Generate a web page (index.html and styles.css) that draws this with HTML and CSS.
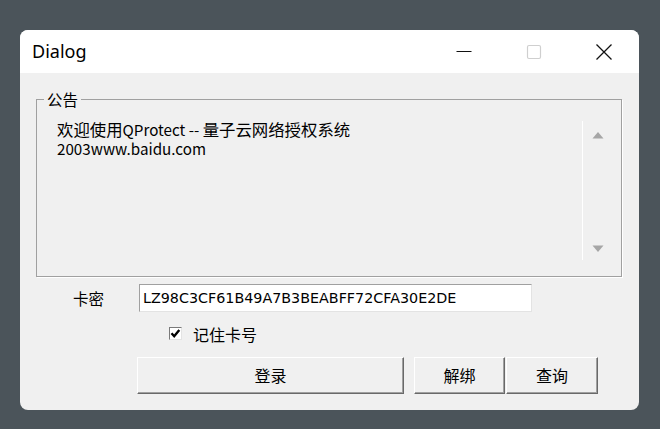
FILE: index.html
```html
<!DOCTYPE html>
<html lang="zh">
<head>
<meta charset="utf-8">
<title>Dialog</title>
<link rel="stylesheet" href="styles.css">
</head>
<body>
<div class="window">
  <div class="titlebar">
    <div class="title">Dialog</div>
    <div class="controls">
      <div class="ctl"><svg width="16" height="16" viewBox="0 0 16 16"><path d="M0.5 7.5H15.5" stroke="#111" stroke-width="1.2"/></svg></div>
      <div class="ctl"><svg width="16" height="16" viewBox="0 0 16 16"><rect x="1.5" y="1.5" width="13" height="13" rx="1.5" fill="none" stroke="#cfcfcf" stroke-width="1.2"/></svg></div>
      <div class="ctl"><svg width="16" height="16" viewBox="0 0 16 16"><path d="M0.5 0.5L15.5 15.5M15.5 0.5L0.5 15.5" stroke="#111" stroke-width="1.3"/></svg></div>
    </div>
  </div>
  <div class="client">
    <fieldset class="group">
      <legend class="legend">公告</legend>
      <div class="memo">
        <div class="memo-text">
          <div><span class="cjk">欢迎使用</span>QProtect -- <span class="cjk">量子云网络授权系统</span></div>
          <div>2003www.baidu.com</div>
        </div>
        <div class="scroll">
          <svg width="12" height="8" viewBox="0 0 12 8"><path d="M0.5 7.5L6 1L11.5 7.5Z" fill="#a6a6a6"/></svg>
          <svg width="12" height="8" viewBox="0 0 12 8"><path d="M0.5 0.5L6 7L11.5 0.5Z" fill="#a6a6a6"/></svg>
        </div>
      </div>
    </fieldset>
    <div class="row-key">
      <span class="label">卡密</span>
      <div class="input">LZ98C3CF61B49A7B3BEABFF72CFA30E2DE</div>
    </div>
    <div class="row-check">
      <span class="checkbox"><svg width="11" height="11" viewBox="0 0 11 11"><path d="M1.5 5.3L4.2 8.2L9.3 2" fill="none" stroke="#000" stroke-width="2.4"/></svg></span>
      <span class="check-label">记住卡号</span>
    </div>
    <div class="row-buttons">
      <div class="btn btn-login">登录</div>
      <div class="btn btn-unbind">解绑</div>
      <div class="btn btn-query">查询</div>
    </div>
  </div>
</div>
</body>
</html>
```
FILE: styles.css
```css
* { box-sizing: border-box; }
html, body { margin: 0; padding: 0; }
body {
  background: #4b545a;
  width: 660px;
  height: 429px;
  overflow: hidden;
  padding: 30px 0 0 20px;
  font-family: "Noto Sans CJK SC", sans-serif;
  color: #000;
}
.window {
  width: 619px;
  height: 380px;
  border-radius: 8px;
  overflow: hidden;
  background: #f0f0f0;
}
.titlebar {
  height: 43px;
  background: #fff;
  display: flex;
  align-items: center;
  justify-content: space-between;
}
.title {
  font-family: "Noto Sans", sans-serif;
  font-size: 18px;
  padding-left: 12px;
  line-height: 24px;
  margin-top: -1px;
}
.controls { display: flex; height: 100%; }
.ctl {
  width: 70px;
  height: 100%;
  display: flex;
  align-items: center;
  justify-content: center;
}
.client {
  padding: 17px 0 0 16px;
}
.group {
  margin: 0;
  width: 586px;
  height: 187px;
  border: 1px solid #a0a0a0;
  box-shadow: 1px 1px 0 #fff;
  padding: 13px 10px 16px 7px;
  min-width: 0;
}
.legend {
  padding: 0 3px;
  font-size: 15.5px;
  line-height: 18px;
}
.memo {
  display: flex;
  height: 139px;
}
.memo-text {
  flex: 1;
  margin-left: 13px;
  font-size: 15.2px;
  line-height: 19px;
  margin-top: -1px;
}
.cjk { font-size: 16.4px; }
.scroll {
  width: 29px;
  border-left: 1px solid #fff;
  display: flex;
  flex-direction: column;
  justify-content: space-between;
  align-items: center;
  padding: 10px 0 7px 1px;
}
.scroll svg { display: block; }
.row-key {
  display: flex;
  align-items: center;
  margin-top: 7px;
  padding-left: 37px;
}
.label {
  width: 66px;
  font-size: 15.5px;
}
.input {
  width: 393px;
  height: 28px;
  background: #fff;
  border: 1px solid;
  border-color: #a0a0a0 #e3e3e3 #e3e3e3 #a0a0a0;
  font-family: "DejaVu Sans", sans-serif;
  font-size: 14.3px;
  line-height: 26px;
  padding-left: 3px;
}
.row-check {
  display: flex;
  align-items: center;
  margin-top: 14px;
  padding-left: 133px;
  height: 15px;
}
.checkbox {
  width: 13px;
  height: 13px;
  background: #fff;
  border: 1px solid;
  border-color: #7a7a7a #e3e3e3 #e3e3e3 #7a7a7a;
  display: flex;
  align-items: center;
  justify-content: center;
}
.checkbox svg { display: block; }
.check-label {
  margin-left: 11px;
  font-size: 16px;
  line-height: 18px;
}
.row-buttons {
  display: flex;
  margin-top: 16px;
  padding-left: 101px;
}
.btn {
  height: 37px;
  background: #f0f0f0;
  border: 1px solid;
  border-color: #fff #696969 #696969 #fff;
  box-shadow: inset -1px -1px 0 #a0a0a0;
  display: flex;
  align-items: center;
  justify-content: center;
  font-size: 16px;
  padding-bottom: 2px;
}
.btn-login { width: 267px; }
.btn-unbind { width: 91px; margin-left: 10px; }
.btn-query { width: 92px; margin-left: 1px; }
```
